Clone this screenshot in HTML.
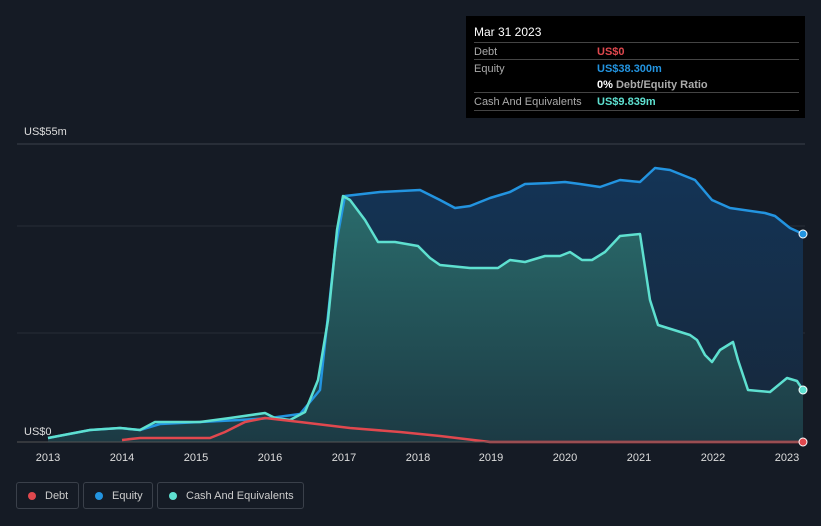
<!DOCTYPE html>
<html><head><style>
body{margin:0;background:#151b25;font-family:"Liberation Sans",sans-serif;}
.wrap{position:relative;width:821px;height:526px;overflow:hidden;}
.tip{position:absolute;left:466px;top:16px;width:339px;height:102px;background:#000;color:#fff;font-size:11px;}
.row{position:absolute;left:8px;width:325px;border-top:1px solid #444;height:16px;}
.lbl{position:absolute;left:0;top:3px;color:#aaa}
.val{position:absolute;left:123px;top:3px;font-weight:bold}
.leg{position:absolute;top:482px;height:27px;border:1px solid #3a404a;border-radius:3px;color:#ccc;font-size:11px;box-sizing:border-box;}
.leg span.d{position:absolute;left:11px;top:9px;width:8px;height:8px;border-radius:50%}
.leg span.t{position:absolute;left:28px;top:7px}
</style></head><body><div class="wrap">
<svg width="821" height="526" style="position:absolute;left:0;top:0">
<defs>
<linearGradient id="ge" x1="0" y1="0" x2="0" y2="1"><stop offset="0" stop-color="#143456"/><stop offset="1" stop-color="#16273a"/></linearGradient>
<linearGradient id="gc" x1="0" y1="0" x2="0" y2="1"><stop offset="0" stop-color="#2a6c6c"/><stop offset="1" stop-color="#1c3a44"/></linearGradient>
</defs>
<line x1="17" y1="144" x2="805" y2="144" stroke="#3a404a"/>
<line x1="17" y1="226" x2="805" y2="226" stroke="#262d38"/>
<line x1="17" y1="333" x2="805" y2="333" stroke="#262d38"/>
<path d="M48,438 L90,430 L120,428 L140,430 L160,424 L200,422 L240,420 L270,418 L300,414 L320,390 L335,250 L345,196 L380,192 L420,190 L440,200 L455,208 L470,206 L490,198 L510,192 L525,184 L550,183 L565,182 L580,184 L600,187 L620,180 L640,182 L655,168 L670,170 L695,180 L712,200 L730,208 L765,213 L775,216 L790,228 L803,234 L803,442 L48,442Z" fill="url(#ge)"/>
<path d="M48,438 L90,430 L120,428 L140,430 L155,422 L200,422 L230,418 L265,413 L275,418 L290,420 L305,412 L318,380 L328,320 L337,230 L343,196 L350,200 L365,220 L378,242 L395,242 L418,246 L430,258 L440,265 L470,268 L498,268 L510,260 L525,262 L545,256 L560,256 L570,252 L582,260 L592,260 L605,252 L620,236 L640,234 L650,300 L658,325 L690,335 L697,340 L705,355 L712,362 L720,350 L733,342 L738,360 L748,390 L770,392 L787,378 L797,381 L803,390 L803,442 L48,442Z" fill="url(#gc)"/>
<path d="M48,438 L90,430 L120,428 L140,430 L160,424 L200,422 L240,420 L270,418 L300,414 L320,390 L335,250 L345,196 L380,192 L420,190 L440,200 L455,208 L470,206 L490,198 L510,192 L525,184 L550,183 L565,182 L580,184 L600,187 L620,180 L640,182 L655,168 L670,170 L695,180 L712,200 L730,208 L765,213 L775,216 L790,228 L803,234" fill="none" stroke="#2394e0" stroke-width="2.5" stroke-linejoin="round"/>
<path d="M48,438 L90,430 L120,428 L140,430 L155,422 L200,422 L230,418 L265,413 L275,418 L290,420 L305,412 L318,380 L328,320 L337,230 L343,196 L350,200 L365,220 L378,242 L395,242 L418,246 L430,258 L440,265 L470,268 L498,268 L510,260 L525,262 L545,256 L560,256 L570,252 L582,260 L592,260 L605,252 L620,236 L640,234 L650,300 L658,325 L690,335 L697,340 L705,355 L712,362 L720,350 L733,342 L738,360 L748,390 L770,392 L787,378 L797,381 L803,390" fill="none" stroke="#5ee0d0" stroke-width="2.5" stroke-linejoin="round"/>
<path d="M122,440 L140,438 L210,438 L225,432 L245,422 L265,418 L300,422 L350,428 L400,432 L440,436 L490,442 L803,442" fill="none" stroke="#e0484e" stroke-width="2.5"/>
<line x1="17" y1="442" x2="805" y2="442" stroke="#555"/>
<circle cx="803" cy="234" r="4" fill="#2394e0" stroke="#fff" stroke-width="1"/>
<circle cx="803" cy="390" r="4" fill="#5ee0d0" stroke="#fff" stroke-width="1"/>
<circle cx="803" cy="442" r="4" fill="#e0484e" stroke="#fff" stroke-width="1"/>
<g fill="#ddd" font-size="11" text-anchor="middle" font-family="Liberation Sans">
<text x="48" y="461">2013</text><text x="122" y="461">2014</text><text x="196" y="461">2015</text><text x="270" y="461">2016</text><text x="344" y="461">2017</text><text x="418" y="461">2018</text><text x="491" y="461">2019</text><text x="565" y="461">2020</text><text x="639" y="461">2021</text><text x="713" y="461">2022</text><text x="787" y="461">2023</text>
</g>
<text x="24" y="135" fill="#ddd" font-size="11" font-family="Liberation Sans">US$55m</text>
<text x="24" y="435" fill="#ddd" font-size="11" font-family="Liberation Sans">US$0</text>
</svg>
<div class="tip">
<div style="position:absolute;left:8px;top:9px;font-size:12px">Mar 31 2023</div>
<div class="row" style="top:26px"><span class="lbl">Debt</span><span class="val" style="color:#e0484e">US$0</span></div>
<div class="row" style="top:43px"><span class="lbl">Equity</span><span class="val" style="color:#2394e0">US$38.300m</span></div>
<div class="row" style="top:60px;border:none"><span class="val" style="color:#fff">0% <span style="color:#aaa;font-weight:bold">Debt/Equity Ratio</span></span></div>
<div class="row" style="top:76px"><span class="lbl">Cash And Equivalents</span><span class="val" style="color:#5ee0d0">US$9.839m</span></div>
<div class="row" style="top:94px;height:0"></div>
</div>
<div class="leg" style="left:16px;width:63px"><span class="d" style="background:#e0484e"></span><span class="t">Debt</span></div>
<div class="leg" style="left:83px;width:70px"><span class="d" style="background:#2394e0"></span><span class="t">Equity</span></div>
<div class="leg" style="left:157px;width:147px"><span class="d" style="background:#5ee0d0"></span><span class="t">Cash And Equivalents</span></div>
</div></body></html>
